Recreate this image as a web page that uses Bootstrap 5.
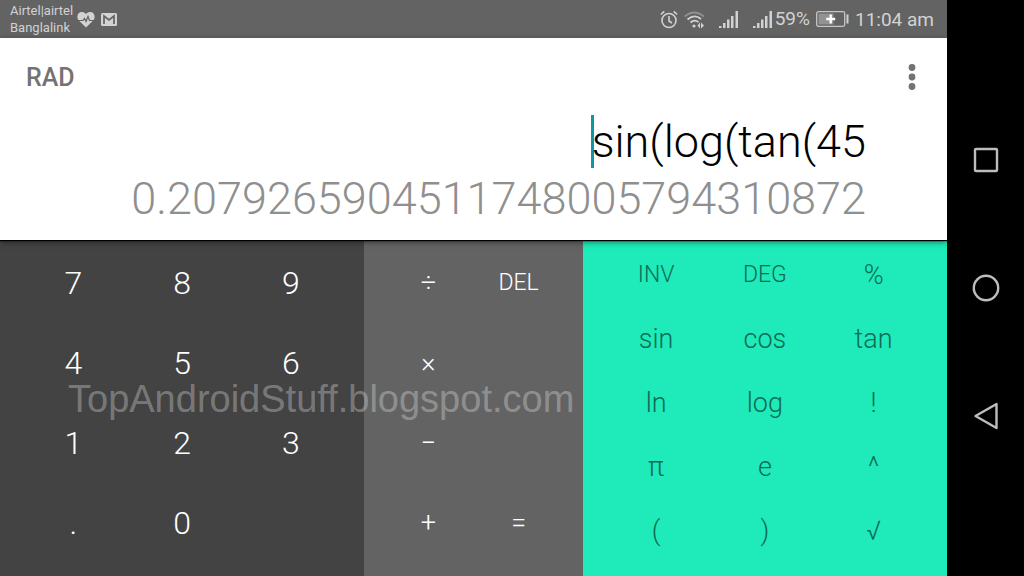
<!DOCTYPE html>
<html lang="en">
<head>
<meta charset="utf-8">
<meta name="viewport" content="width=device-width, initial-scale=1">
<title>Calculator</title>
<link href="https://cdn.jsdelivr.net/npm/bootstrap@5.3.0/dist/css/bootstrap.min.css" rel="stylesheet">
<style>
  body { font-family: Roboto, sans-serif; background: #000; }
  svg { display: block; flex: none; }
  .status-bar { background: #636363; color: #d2d2d2; height: 38px; padding: 0 13px 0 10px; }
  .carriers { font-size: 13px; line-height: 17px; }
  .battery-text { font-size: 19px; line-height: 24px; }
  .clock-text { font-size: 19px; line-height: 24px; padding-top: 2px; }
  .readout { background: #fff; height: 202px; box-shadow: 0 1px 1px #000, 0 2px 6px rgba(0,0,0,.5); z-index: 1; }
  .angle-mode { font-size: 25px; line-height: 32px; font-weight: 500; color: #737373; }
  .top-row { padding: 24px 25px 0 26px; height: 77px; }
  .figures { padding-right: 81px; }
  .formula { width: 275px; height: 53px; border: 0; padding: 0; outline: 0;
    font-size: 45px; font-weight: 300; color: #000; text-align: right;
    background: linear-gradient(#0f96a5, #0f96a5) left / 3px 100% no-repeat; }
  .result { font-size: 45px; line-height: 62px; font-weight: 300; color: #8f8f8f; }
  .pads { display: grid; grid-template-columns: 10fr 6fr 10fr; }
  .pad { display: grid; grid-auto-rows: 1fr; padding: 3px 19px 13px; min-width: 0; }
  .pad-digits { grid-template-columns: repeat(3, 1fr); background: #434343; color: #fff; }
  .pad-ops { grid-template-columns: repeat(2, 1fr); background: #636363; color: #fff; }
  .pad-adv { grid-template-columns: repeat(3, 1fr); background: #1eebb9; color: #0e6b55; }
  .key { border: 0; padding: 0; background: transparent; color: inherit; font-weight: 300; line-height: 40px; }
  .pad-digits .key { font-size: 32px; }
  .key-caps { font-size: 23px; }
  .key-word { font-size: 27px; }
  .watermark { left: 68px; top: 135px; font: 38px/48px "Liberation Sans", sans-serif; color: rgba(255,255,255,.3); pointer-events: none; }
  .nav-strip { width: 77px; padding: 96px 0; }
  .nav-key { border: 0; padding: 0; background: transparent; height: 128px; }
  .gap-s { margin-left: 6px; }
  .gap-l { margin-left: 14px; }
</style>
</head>
<body>
<div class="d-flex min-vh-100">
  <main class="d-flex flex-column flex-grow-1">
    <header class="status-bar d-flex align-items-center justify-content-between">
      <div class="d-flex align-items-center">
        <div class="carriers">Airtel|airtel<br>Banglalink</div>
        <svg class="ms-1" width="18" height="17" viewBox="0 0 18 17"><path d="M9 16.500L1.800 9.500C-.8 6.700.2 1 5 1c2 0 3.200 1 4 2.200C9.800 2 11 1 13 1c4.800 0 5.800 5.700 3.200 8.500z" fill="#d2d2d2"/><path d="M0 9.500h6l1.500-2 1.500 3 2-5 1.500 4h6" fill="none" stroke="#636363" stroke-width="1.200"/></svg>
        <svg class="gap-s" width="16" height="13" viewBox="0 0 16 13"><rect width="16" height="13" rx="1.500" fill="#d2d2d2"/><path d="M3 11V3l5 4 5-4v8" fill="none" stroke="#636363" stroke-width="1.700"/></svg>
      </div>
      <div class="d-flex align-items-center">
        <svg width="18" height="19" viewBox="0 0 18 19" fill="none" stroke="#d2d2d2" stroke-width="1.600"><circle cx="9" cy="10.500" r="7"/><path d="M9 6v5l3 2M.8 4.500L4.300 1.300M17.200 4.500L13.700 1.300"/></svg>
        <svg class="gap-s" width="21" height="19" viewBox="0 0 21 19" fill="none" stroke="#d2d2d2" stroke-width="1.800"><path d="M.7 6.500Q10 -1.500 20 6.500" stroke="#929292"/><path d="M3.500 9.500q7-6 13.500-.5M6.500 12.500q4-3.500 8-.5"/><circle cx="10" cy="16" r="1.600" fill="#d2d2d2" stroke="none"/><path d="M16 12.500l-2.500 3 2.500 3zM17 12.500l3 3-3 3z" fill="#d2d2d2" stroke="none"/></svg>
        <svg class="gap-l" width="20" height="19" viewBox="0 0 20 19" fill="#d2d2d2"><path d="M0 16h2.500v2H0zM4 13h2.500v5H4zM8 9.500h2.500V18H8zM12 6h2.500v12H12zM16.500 1H19v17h-2.500z"/></svg>
        <svg class="gap-l" width="20" height="19" viewBox="0 0 20 19" fill="#d2d2d2"><path d="M0 16h2.500v2H0zM4 13h2.500v5H4zM8 9.500h2.500V18H8zM12 6h2.500v12H12zM16.500 1H19v17h-2.500z"/></svg>
        <span class="battery-text" style="margin-left:2px">59%</span>
        <svg class="gap-s" width="33" height="16" viewBox="0 0 33 16"><rect x=".7" y=".7" width="28" height="14.600" rx="1.800" fill="none" stroke="#c6c6c6" stroke-width="1.300"/><path d="M2.500 2.500h15v11h-15z" fill="#929292"/><path d="M14.700 3.500v9M10.200 8h9" stroke="#fff" stroke-width="2.400"/><path d="M31.500 3.500v9" stroke="#d2d2d2" stroke-width="2"/></svg>
        <span class="clock-text gap-s">11:04 am</span>
      </div>
    </header>
    <section class="readout position-relative">
      <div class="top-row d-flex justify-content-between align-items-start">
        <span class="angle-mode">RAD</span>
        <button type="button" class="btn p-0 border-0" aria-label="More options"><svg width="20" height="32" viewBox="0 0 20 32" fill="#737373"><circle cx="10" cy="5.500" r="3.400"/><circle cx="10" cy="15" r="3.400"/><circle cx="10" cy="24.500" r="3.400"/></svg></button>
      </div>
      <div class="figures d-flex flex-column align-items-end">
        <input class="formula" type="text" aria-label="Formula" value="sin(log(tan(45">
        <output class="result">0.2079265904511748005794310872</output>
      </div>
    </section>
    <section class="pads flex-grow-1 position-relative">
      <div class="pad pad-digits">
        <button class="key">7</button><button class="key">8</button><button class="key">9</button>
        <button class="key">4</button><button class="key">5</button><button class="key">6</button>
        <button class="key">1</button><button class="key">2</button><button class="key">3</button>
        <button class="key">.</button><button class="key">0</button>
      </div>
      <div class="pad pad-ops">
        <button class="key key-word">÷</button><button class="key key-caps">DEL</button>
        <button class="key key-word">×</button><span></span>
        <button class="key key-word">−</button><span></span>
        <button class="key key-word">+</button><button class="key key-word">=</button>
      </div>
      <div class="pad pad-adv">
        <button class="key key-caps">INV</button><button class="key key-caps">DEG</button><button class="key key-word">%</button>
        <button class="key key-word">sin</button><button class="key key-word">cos</button><button class="key key-word">tan</button>
        <button class="key key-word">ln</button><button class="key key-word">log</button><button class="key key-word">!</button>
        <button class="key key-word">π</button><button class="key key-word">e</button><button class="key key-word">^</button>
        <button class="key key-word">(</button><button class="key key-word">)</button><button class="key key-word">√</button>
      </div>
      <div class="watermark position-absolute text-nowrap">TopAndroidStuff.blogspot.com</div>
    </section>
  </main>
  <nav class="nav-strip d-flex flex-column align-items-center" aria-label="System">
    <button class="nav-key" aria-label="Recent apps"><svg width="28" height="28" viewBox="0 0 28 28" fill="none" stroke="#bdbdbd" stroke-width="2.400"><rect x="3" y="3" width="22" height="22" rx="1"/></svg></button>
    <button class="nav-key" aria-label="Home"><svg width="28" height="28" viewBox="0 0 28 28" fill="none" stroke="#bdbdbd" stroke-width="2.400"><circle cx="14" cy="14" r="12.200"/></svg></button>
    <button class="nav-key" aria-label="Back"><svg width="28" height="28" viewBox="0 0 28 28" fill="none" stroke="#bdbdbd" stroke-width="2.400" stroke-linejoin="round"><path d="M24.500 2v24L3.500 14z"/></svg></button>
  </nav>
</div>
<script src="https://cdn.jsdelivr.net/npm/bootstrap@5.3.0/dist/js/bootstrap.bundle.min.js"></script>
</body>
</html>
